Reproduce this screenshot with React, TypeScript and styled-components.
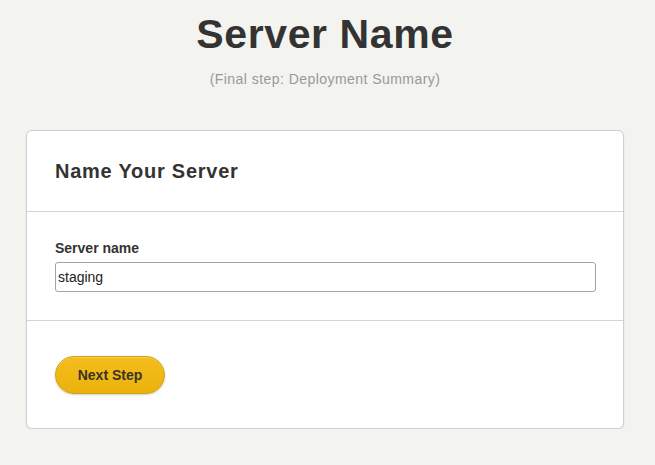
import * as React from "react";
import styled, { createGlobalStyle } from "styled-components";

const GlobalStyle = createGlobalStyle`
  html, body {
    margin: 0;
    padding: 0;
    background: #f3f3ef;
    font-family: "Liberation Sans", Arial, Helvetica, sans-serif;
    color: #333;
  }
`;

const Page = styled.div`
  width: 598px;
  margin: 0 0 0 26px;
  padding-top: 10px;
`;

const Title = styled.h1`
  margin: 0;
  font-size: 41px;
  line-height: 48px;
  font-weight: bold;
  text-align: center;
  color: #333;
  letter-spacing: 0.6px;
`;

const Subtitle = styled.p`
  margin: 13px 0 0;
  font-size: 14px;
  line-height: 16px;
  text-align: center;
  color: #999;
  letter-spacing: 0.45px;
`;

const Card = styled.div`
  margin-top: 43px;
  background: #fff;
  border: 1px solid #cfcfcf;
  border-radius: 6px;
  box-shadow: 0 1px 2px rgba(0, 0, 0, 0.08);
`;

const Section = styled.div<{ $pad: string }>`
  padding: ${p => p.$pad};
  & + & {
    border-top: 1px solid #d4d4d4;
  }
`;

const Heading = styled.h2`
  margin: 0;
  font-size: 20px;
  line-height: 24px;
  font-weight: bold;
  color: #333;
  letter-spacing: 0.75px;
`;

const Label = styled.label`
  display: block;
  font-size: 14px;
  line-height: 16px;
  font-weight: bold;
  color: #333;
  margin-bottom: 6px;
`;

const Input = styled.input`
  display: block;
  box-sizing: border-box;
  width: 541px;
  height: 30px;
  padding: 0 2px;
  border: 1px solid #a3a3a3;
  border-radius: 3px;
  font-family: "Liberation Sans", Arial, sans-serif;
  font-size: 14px;
  color: #222;
  background: #fff;
  outline: none;
`;

const Button = styled.button`
  box-sizing: border-box;
  width: 110px;
  height: 38px;
  border: 1px solid #d4a20e;
  border-radius: 19px;
  background: linear-gradient(#f3bd1c, #ebb20c);
  box-shadow: 0 1px 2px rgba(0, 0, 0, 0.18), inset 0 1px 0 rgba(255, 255, 255, 0.25);
  font-family: "Liberation Sans", Arial, sans-serif;
  font-size: 14px;
  font-weight: bold;
  color: #3a3325;
  cursor: pointer;
`;

export default function App() {
  const [name, setName] = React.useState("staging");
  return (
    <>
      <GlobalStyle />
      <Page>
        <Title>Server Name</Title>
        <Subtitle>(Final step: Deployment Summary)</Subtitle>
        <Card>
          <Section $pad="28px 28px">
            <Heading>Name Your Server</Heading>
          </Section>
          <Section $pad="28px 28px 28px">
            <Label htmlFor="server-name">Server name</Label>
            <Input id="server-name" value={name} onChange={e => setName(e.target.value)} autoFocus />
          </Section>
          <Section $pad="35px 28px 34px">
            <Button>Next Step</Button>
          </Section>
        </Card>
      </Page>
    </>
  );
}
